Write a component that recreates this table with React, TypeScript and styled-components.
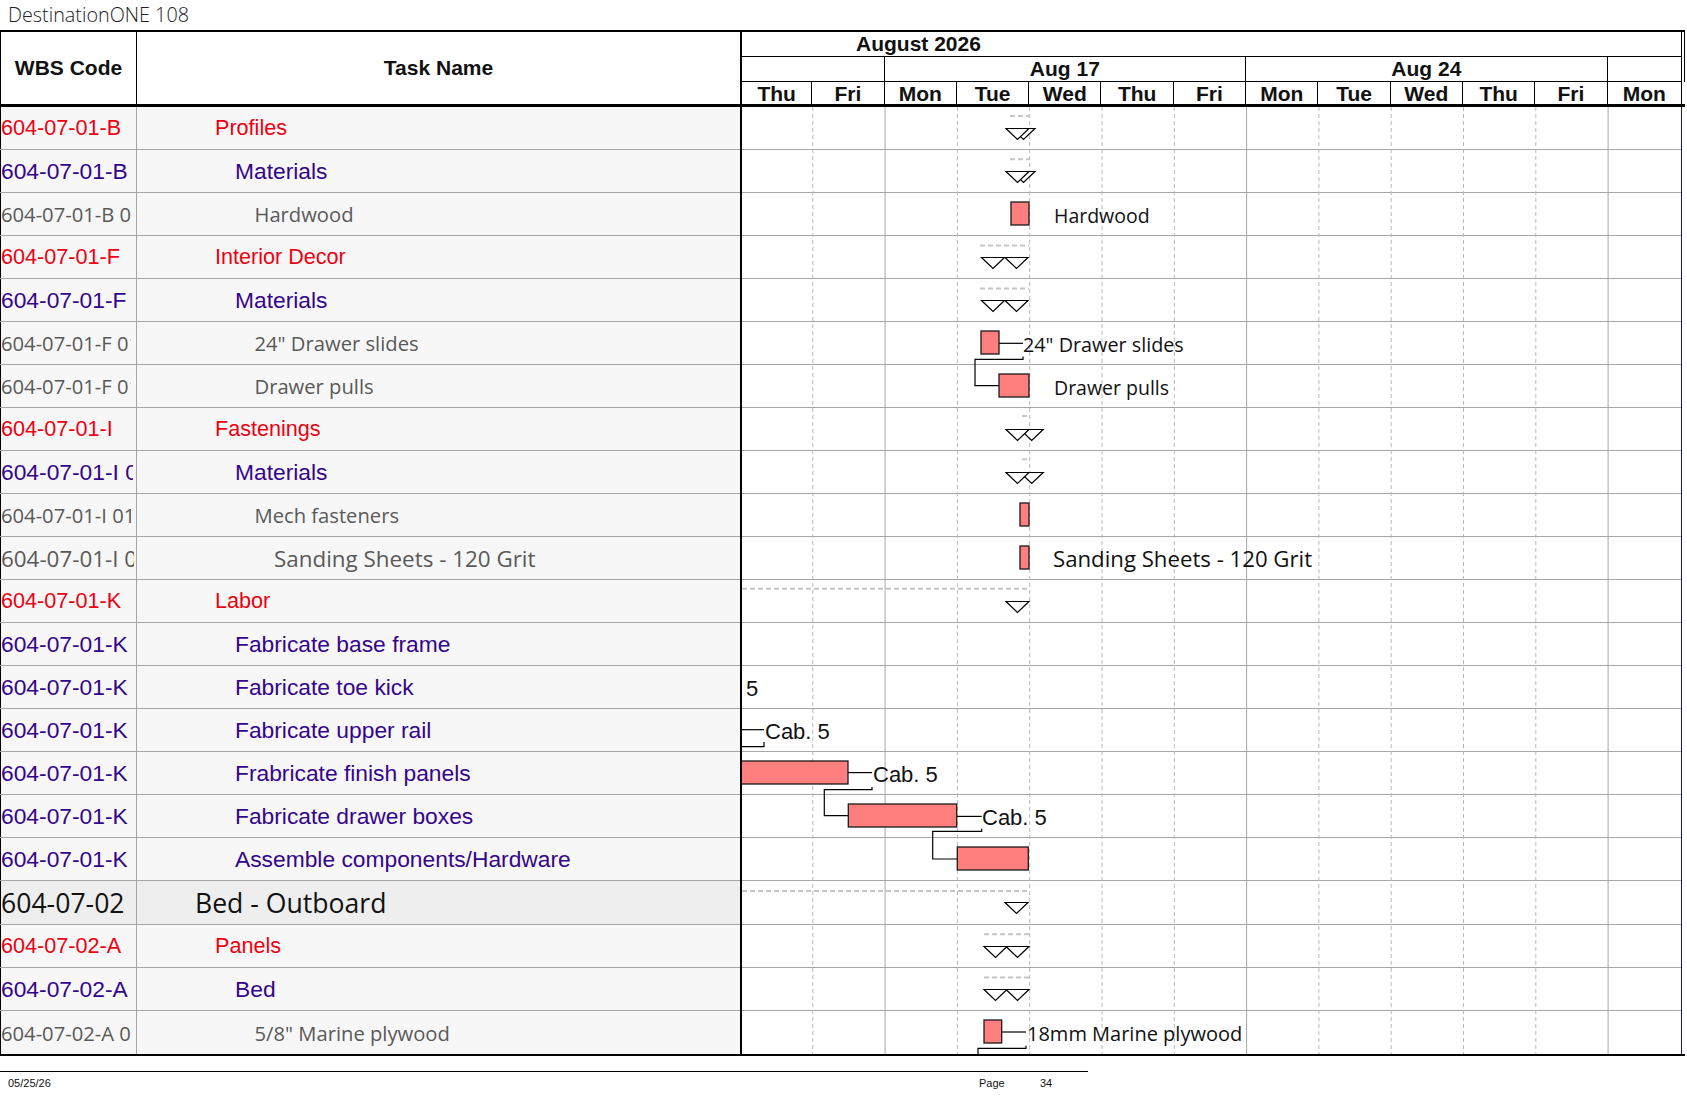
import React from "react";
import styled, { createGlobalStyle, css } from "styled-components";

const SANS = `"Liberation Sans", Arial, sans-serif`;
const HUMANIST = `"Open Sans", "Noto Sans", sans-serif`;

const DAY = 72.3;
const CHART_X = 742;
const CHART_W = 939;
const ROW_H = 43;

const GlobalStyle = createGlobalStyle`
  html, body {
    margin: 0;
    padding: 0;
    background: #ffffff;
  }
  body {
    font-family: ${SANS};
    color: #111;
  }
`;

type Kind = "phase" | "group" | "item" | "section";

interface Task {
  wbs: string;
  name: string;
  kind: Kind;
  big?: boolean;
}

const tasks: Task[] = [
  { wbs: "604-07-01-B", name: "Profiles", kind: "phase" },
  { wbs: "604-07-01-B 01", name: "Materials", kind: "group" },
  { wbs: "604-07-01-B 01.01", name: "Hardwood", kind: "item" },
  { wbs: "604-07-01-F", name: "Interior Decor", kind: "phase" },
  { wbs: "604-07-01-F 01", name: "Materials", kind: "group" },
  { wbs: "604-07-01-F 01.01", name: '24" Drawer slides', kind: "item" },
  { wbs: "604-07-01-F 01.02", name: "Drawer pulls", kind: "item" },
  { wbs: "604-07-01-I", name: "Fastenings", kind: "phase" },
  { wbs: "604-07-01-I 01", name: "Materials", kind: "group" },
  { wbs: "604-07-01-I 01.01", name: "Mech fasteners", kind: "item" },
  { wbs: "604-07-01-I 01.02", name: "Sanding Sheets - 120 Grit", kind: "item", big: true },
  { wbs: "604-07-01-K", name: "Labor", kind: "phase" },
  { wbs: "604-07-01-K 01", name: "Fabricate base frame", kind: "group" },
  { wbs: "604-07-01-K 02", name: "Fabricate toe kick", kind: "group" },
  { wbs: "604-07-01-K 03", name: "Fabricate upper rail", kind: "group" },
  { wbs: "604-07-01-K 04", name: "Frabricate finish panels", kind: "group" },
  { wbs: "604-07-01-K 05", name: "Fabricate drawer boxes", kind: "group" },
  { wbs: "604-07-01-K 06", name: "Assemble components/Hardware", kind: "group" },
  { wbs: "604-07-02", name: "Bed - Outboard", kind: "section" },
  { wbs: "604-07-02-A", name: "Panels", kind: "phase" },
  { wbs: "604-07-02-A 01", name: "Bed", kind: "group" },
  { wbs: "604-07-02-A 01.01", name: '5/8" Marine plywood', kind: "item" },
];

const kinds: Record<Kind, { color: string; family: string; size: number; indent: number; clip: number }> = {
  phase: { color: "#ee0010", family: SANS, size: 21.6, indent: 78, clip: 134 },
  group: { color: "#34058c", family: SANS, size: 22.8, indent: 98, clip: 132 },
  item: { color: "#595959", family: HUMANIST, size: 20.2, indent: 117.5, clip: 130 },
  section: { color: "#111111", family: HUMANIST, size: 26.6, indent: 58, clip: 134 },
};

const rowTop = (i: number) => i * ROW_H + (i > 18 ? 1 : 0);
const rowHeight = (i: number) => (i === 18 ? 44 : ROW_H);
const BODY_H = rowTop(tasks.length - 1) + ROW_H;
const X = (abs: number) => abs - CHART_X;

const Page = styled.div`
  width: 1687px;
`;

const Title = styled.div`
  height: 30px;
  box-sizing: border-box;
  padding: 2px 0 0 8px;
  font-family: ${HUMANIST};
  font-weight: 300;
  font-size: 19.8px;
  line-height: 25px;
  color: #222;
`;

const Header = styled.div`
  display: flex;
  width: 1685px;
  height: 77px;
  box-sizing: border-box;
  border-top: 2px solid #000;
  border-bottom: 3px solid #000;
`;

const HeadLabel = styled.div<{ $width: number }>`
  width: ${({ $width }) => $width}px;
  box-sizing: border-box;
  display: flex;
  align-items: center;
  justify-content: center;
  font-weight: bold;
  font-size: 21px;
`;

const HeadWbs = styled(HeadLabel)`
  border-left: 1px solid #000;
  border-right: 1px solid #000;
`;

const TimeScale = styled.div`
  width: ${CHART_W}px;
  border-left: 2px solid #000;
  border-right: 1px solid #000;
  display: flex;
  flex-direction: column;
`;

const HeadTail = styled.div`
  width: 3px;
  height: 50px;
  box-sizing: border-box;
  border-right: 1px solid #000;
`;

const MonthRow = styled.div`
  height: 25px;
  box-sizing: border-box;
  border-bottom: 1px solid #000;
  padding-left: 114px;
  font-weight: bold;
  font-size: 21px;
  line-height: 24px;
`;

const ScaleRow = styled.div<{ $cols: string; $height: number; $line?: boolean }>`
  display: grid;
  grid-template-columns: ${({ $cols }) => $cols};
  height: ${({ $height }) => $height}px;
  box-sizing: border-box;
  ${({ $line }) =>
    $line &&
    css`
      border-bottom: 1px solid #000;
    `}
`;

const ScaleCell = styled.div`
  box-sizing: border-box;
  border-right: 1px solid #000;
  display: flex;
  align-items: center;
  justify-content: center;
  font-weight: bold;
  font-size: 21px;
  white-space: nowrap;

  &:last-child {
    border-right: none;
  }
`;

const Body = styled.div`
  display: flex;
  width: 1685px;
  border-bottom: 2px solid #000;
`;

const Sheet = styled.div`
  display: flex;
  flex-direction: column;
  width: 740px;
`;

const Row = styled.div<{ $tall?: boolean; $shade?: boolean }>`
  display: flex;
  height: ${({ $tall }) => ($tall ? 44 : ROW_H)}px;
  box-sizing: border-box;
  border-bottom: 1px solid #a6a6a6;
  background: ${({ $shade }) => ($shade ? "#eeeeee" : "#f7f7f7")};

  &:last-child {
    border-bottom: none;
  }
`;

const rowText = css<{ $kind: Kind; $big?: boolean }>`
  color: ${({ $kind }) => kinds[$kind].color};
  font-family: ${({ $kind }) => kinds[$kind].family};
  font-size: ${({ $kind, $big }) => ($big ? 22.4 : kinds[$kind].size)}px;
  white-space: nowrap;
  overflow: hidden;
`;

const WbsCell = styled.div`
  width: 137px;
  box-sizing: border-box;
  border-left: 1px solid #000;
  border-right: 1px solid #a6a6a6;
  display: flex;
  align-items: center;
`;

const WbsText = styled.span<{ $kind: Kind; $big?: boolean }>`
  ${rowText}
  display: block;
  width: ${({ $kind, $big }) => ($big ? 133 : kinds[$kind].clip)}px;
`;

const NameCell = styled.div<{ $kind: Kind; $big?: boolean }>`
  ${rowText}
  width: 603px;
  box-sizing: border-box;
  display: flex;
  align-items: center;
  padding-left: ${({ $kind, $big }) => ($big ? 137 : kinds[$kind].indent)}px;
`;

const ChartPane = styled.div`
  width: ${CHART_W}px;
  border-left: 2px solid #000;
  border-right: 1px solid #1414a0;
  background: #ffffff;
`;

const ChartSvg = styled.svg`
  display: block;
  overflow: hidden;
`;

const BarLabel = styled.text<{ $arial?: boolean; $size?: number }>`
  font-family: ${({ $arial }) => ($arial ? SANS : HUMANIST)};
  font-size: ${({ $size }) => $size ?? 19.5}px;
  fill: #111;
`;

const FooterRule = styled.div`
  width: 1088px;
  margin-top: 15px;
  border-top: 1px solid #000;
`;

const Footer = styled.div`
  display: grid;
  grid-template-columns: 971px 61px auto;
  padding: 5px 0 0 8px;
  font-size: 11px;
  line-height: 13px;
  color: #111;
`;

const days = ["Thu", "Fri", "Mon", "Tue", "Wed", "Thu", "Fri", "Mon", "Tue", "Wed", "Thu", "Fri", "Mon"];

interface Summary {
  row: number;
  from: number;
  to: number;
  dash: number;
  start?: number;
  end: number;
}

const summaries: Summary[] = [
  { row: 0, from: 1010, to: 1029, dash: 9, start: 1017.5, end: 1023.5 },
  { row: 1, from: 1010, to: 1029, dash: 9.3, start: 1017.5, end: 1023.5 },
  { row: 3, from: 980, to: 1029, dash: 9.5, start: 993, end: 1016.5 },
  { row: 4, from: 980, to: 1029, dash: 9.5, start: 993, end: 1016.5 },
  { row: 7, from: 1022, to: 1029, dash: 8, start: 1017.5, end: 1031.7 },
  { row: 8, from: 1022, to: 1029, dash: 8.3, start: 1017.5, end: 1031.7 },
  { row: 11, from: 742, to: 1029, dash: 8.7, end: 1017.5 },
  { row: 18, from: 742, to: 1028, dash: 10, end: 1016.5 },
  { row: 19, from: 984, to: 1029, dash: 9.3, start: 995.5, end: 1017.5 },
  { row: 20, from: 984, to: 1029, dash: 9.4, start: 995.5, end: 1017.5 },
];

const bars = [
  { row: 2, from: 1011, to: 1029 },
  { row: 5, from: 981, to: 999 },
  { row: 6, from: 999, to: 1029 },
  { row: 9, from: 1020, to: 1029 },
  { row: 10, from: 1020, to: 1029 },
  { row: 15, from: 739, to: 848 },
  { row: 16, from: 848.3, to: 956.7 },
  { row: 17, from: 957.3, to: 1028.3 },
  { row: 21, from: 984, to: 1001.7 },
];

// leader lines from a bar to its label, and links to the next task: [abs x, row, offset in row]
const links: [number, number, number][][] = [
  [[999, 5, 21.3], [1023, 5, 21.3]],
  [[1023, 5, 34.5], [1023, 5, 37.3], [975, 5, 37.3], [975, 6, 20.7], [999, 6, 20.7]],
  [[742, 14, 20.7], [764, 14, 20.7]],
  [[764, 14, 33], [764, 14, 37.7], [740, 14, 37.7]],
  [[848, 15, 20.6], [872, 15, 20.6]],
  [[872, 15, 35], [872, 15, 37.6], [824.3, 15, 37.6], [824.3, 16, 20.7], [848.3, 16, 20.7]],
  [[957, 16, 21.4], [981.7, 16, 21.4]],
  [[981.7, 16, 33.8], [981.7, 16, 36.4], [932.7, 16, 36.4], [932.7, 17, 21], [957.3, 17, 21]],
  [[1001.7, 21, 21], [1026, 21, 21]],
  [[1026, 21, 34.8], [1026, 21, 37.3], [978, 21, 37.3], [978, 21, 46]],
];

const labels = [
  { row: 2, x: 1054, text: "Hardwood" },
  { row: 5, x: 1023, text: '24" Drawer slides', size: 19.8 },
  { row: 6, x: 1054, text: "Drawer pulls" },
  { row: 10, x: 1053, text: "Sanding Sheets - 120 Grit", size: 22.2 },
  { row: 13, x: 746, text: "5", arial: true, size: 22 },
  { row: 14, x: 765, text: "Cab. 5", arial: true, size: 22 },
  { row: 15, x: 873, text: "Cab. 5", arial: true, size: 22 },
  { row: 16, x: 982, text: "Cab. 5", arial: true, size: 22 },
  { row: 21, x: 1027, text: "18mm Marine plywood", size: 20 },
];

const Marker = ({ cx, y }: { cx: number; y: number }) => (
  <polygon
    points={`${X(cx) - 11.5},${y} ${X(cx) + 11.5},${y} ${X(cx)},${y + 11}`}
    fill="#fff"
    stroke="#000"
    strokeWidth={1.2}
  />
);

const Chart = () => (
  <ChartSvg width={CHART_W} height={BODY_H}>
    {tasks.slice(0, -1).map((_, i) => (
      <line
        key={`r${i}`}
        x1={0}
        x2={CHART_W}
        y1={rowTop(i) + rowHeight(i) - 0.5}
        y2={rowTop(i) + rowHeight(i) - 0.5}
        stroke="#a6a6a6"
      />
    ))}
    {Array.from({ length: 12 }, (_, j) => {
      const k = j + 1;
      const x = k * DAY - 2 + 0.5;
      const week = k === 2 || k === 7 || k === 12;
      return (
        <line
          key={`d${k}`}
          x1={x}
          x2={x}
          y1={0}
          y2={BODY_H}
          stroke={week ? "#a6a6a6" : "#b8b8b8"}
          strokeDasharray={week ? undefined : "4 3"}
        />
      );
    })}
    {summaries.map((s) => {
      const top = rowTop(s.row);
      return (
        <g key={`s${s.row}`}>
          <line x1={X(s.from)} x2={X(s.to)} y1={top + s.dash} y2={top + s.dash} stroke="#c6c6c6" strokeWidth={2} strokeDasharray="5 3" />
          <Marker cx={s.end} y={top + 21.5} />
          {s.start !== undefined && <Marker cx={s.start} y={top + 21.5} />}
        </g>
      );
    })}
    {links.map((pts, i) => (
      <polyline
        key={`l${i}`}
        points={pts.map(([x, r, o]) => `${X(x)},${rowTop(r) + o}`).join(" ")}
        fill="none"
        stroke="#000"
        strokeWidth={1.2}
      />
    ))}
    {bars.map((b) => (
      <rect
        key={`b${b.row}`}
        x={X(b.from)}
        y={rowTop(b.row) + 9}
        width={b.to - b.from}
        height={23}
        fill="#ff7f7f"
        stroke="#1a1a1a"
        strokeWidth={1.3}
      />
    ))}
    {labels.map((l) => (
      <BarLabel key={`t${l.row}`} x={X(l.x)} y={rowTop(l.row) + 29.5} $arial={l.arial} $size={l.size}>
        {l.text}
      </BarLabel>
    ))}
  </ChartSvg>
);

const App = () => (
  <Page>
    <GlobalStyle />
    <Title>DestinationONE 108</Title>
    <Header>
      <HeadWbs $width={137}>WBS Code</HeadWbs>
      <HeadLabel $width={603}>Task Name</HeadLabel>
      <TimeScale>
        <MonthRow>August 2026</MonthRow>
        <ScaleRow $cols="142.6px 361.5px 361.5px 1fr" $height={25} $line>
          <ScaleCell />
          <ScaleCell>Aug 17</ScaleCell>
          <ScaleCell>Aug 24</ScaleCell>
          <ScaleCell />
        </ScaleRow>
        <ScaleRow $cols={`70.3px repeat(11, ${DAY}px) 1fr`} $height={22}>
          {days.map((d, i) => (
            <ScaleCell key={i}>{d}</ScaleCell>
          ))}
        </ScaleRow>
      </TimeScale>
      <HeadTail />
    </Header>
    <Body>
      <Sheet>
        {tasks.map((t, i) => (
          <Row key={i} $tall={i === 18} $shade={t.kind === "section"}>
            <WbsCell>
              <WbsText $kind={t.kind} $big={t.big}>
                {t.wbs}
              </WbsText>
            </WbsCell>
            <NameCell $kind={t.kind} $big={t.big}>
              {t.name}
            </NameCell>
          </Row>
        ))}
      </Sheet>
      <ChartPane>
        <Chart />
      </ChartPane>
    </Body>
    <FooterRule />
    <Footer>
      <span>05/25/26</span>
      <span>Page</span>
      <span>34</span>
    </Footer>
  </Page>
);

export default App;
